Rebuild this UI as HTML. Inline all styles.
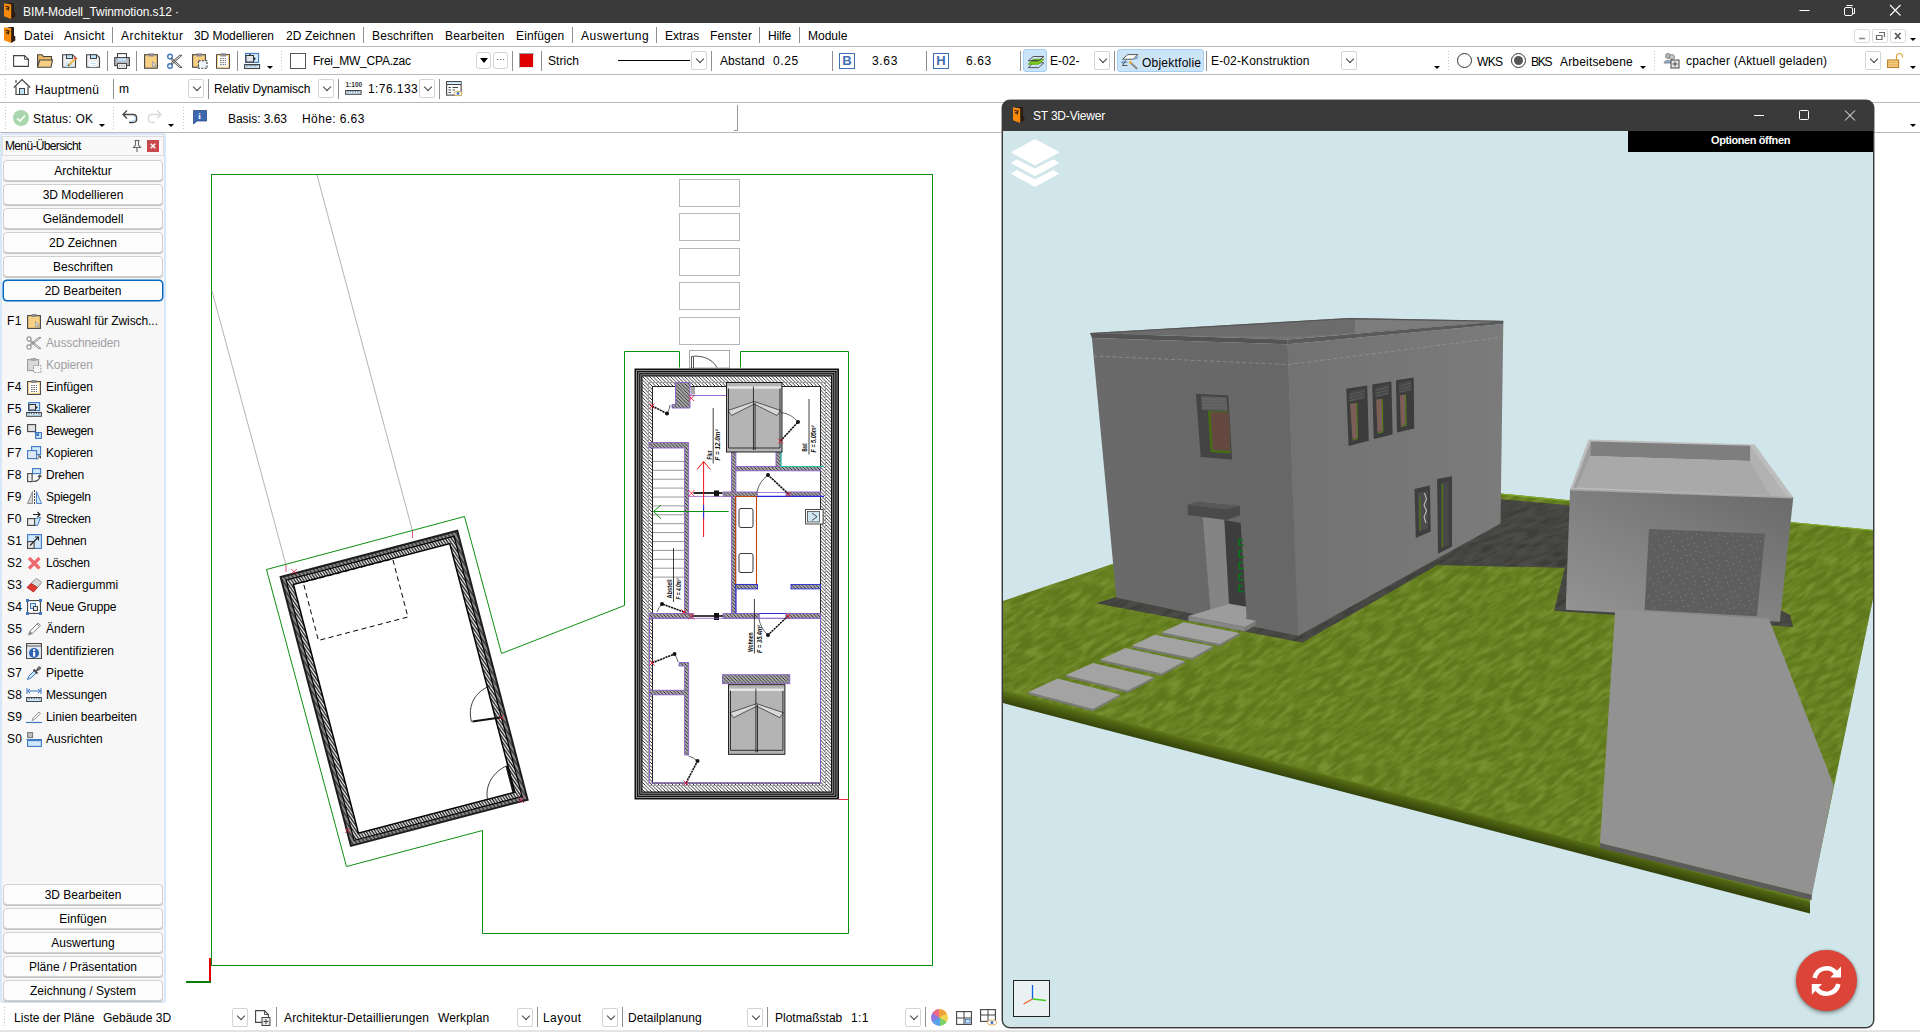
<!DOCTYPE html>
<html lang="de"><head><meta charset="utf-8"><title>BIM-Modell_Twinmotion.s12</title>
<style>
*{box-sizing:border-box}
html,body{margin:0;padding:0}
body{width:1920px;height:1032px;position:relative;overflow:hidden;background:#fff;font-family:"Liberation Sans",sans-serif;font-size:12px;color:#000}
.a{position:absolute}
.t{position:absolute;white-space:nowrap;line-height:14px;height:14px;font-size:12px;letter-spacing:-0.1px}
.hl{position:absolute;left:0;width:1920px;height:1px;background:#b9b9b9}
.vs{position:absolute;width:1px;background:#8f8f8f}
.dd{position:absolute;width:16px;height:19px;border:1px solid #d4d4d4;border-radius:2px;background:#fff}
.dd:after{content:"";position:absolute;left:4.500px;top:4px;width:5px;height:5px;border-right:1px solid #444;border-bottom:1px solid #444;transform:rotate(45deg)}
.ar{position:absolute;width:0;height:0;border-left:3px solid transparent;border-right:3px solid transparent;border-top:3px solid #000}
.grip{position:absolute;width:1px;background:repeating-linear-gradient(to bottom,#c4c4c4 0,#c4c4c4 1px,transparent 1px,transparent 3px)}
.mb{position:absolute;left:3px;width:160px;height:21px;border:1px solid #d0d0d0;border-radius:4px;background:#fdfdfd;text-align:center;line-height:21px;font-size:12px;box-shadow:0 1px 0 #c4c4c4}
.mb.sel{border:1px solid #0067c0;box-shadow:0 0 0 0.5px #0067c0}
.k{position:absolute;left:7px;font-size:12px;line-height:14px;white-space:nowrap;letter-spacing:0.3px}
.l{position:absolute;left:46px;font-size:12px;line-height:14px;white-space:nowrap;letter-spacing:0.05px}
.l.dis{color:#a0a0a0}
.ic{position:absolute;left:26px;width:16px;height:16px}
svg{position:absolute;overflow:visible}
</style></head><body>
<!-- ===== title bar ===== -->
<div class="a" style="left:0;top:0;width:1920px;height:23px;background:#3a3a3a"></div>
<svg style="left:3px;top:2px" width="14" height="18" viewBox="0 0 14 18"><path d="M3.5 1H11V10H12.3V14.6L8 17V2.5Z" fill="#2a1d12"/><path d="M1 1.2L8.2 2.6V17L1 14.2Z" fill="#f78a0c"/><path d="M2.5 4.2L6 5.2L5 8.5M3 6.6L5.8 7.3" stroke="#2a1d12" stroke-width="1.1" fill="none"/></svg>
<div class="t" style="left:23px;top:5px;color:#fff;letter-spacing:-0.08px;--w:155">BIM-Modell_Twinmotion.s12 ·</div>
<svg style="left:1795px;top:0" width="120" height="23" viewBox="0 0 120 23"><path d="M4.5 10.5H14.5" stroke="#fff" stroke-width="1" fill="none"/><path d="M51.5 5.5H57.5V6M59.5 8V13.5H58" stroke="#fff" stroke-width="1" fill="none"/><rect x="49.500" y="7.500" width="8" height="8" rx="1.500" fill="none" stroke="#fff" stroke-width="1"/><path d="M95 5L105.500 15.500M105.500 5L95 15.500" stroke="#fff" stroke-width="1.100" fill="none"/></svg>
<!-- ===== menu bar ===== -->
<svg style="left:3px;top:26px" width="14" height="18" viewBox="0 0 14 18"><path d="M3.5 1H11V10H12.3V14.6L8 17V2.5Z" fill="#2a1d12"/><path d="M1 1.200L8.200 2.600V17L1 14.200Z" fill="#f78a0c"/><path d="M2.500 4.200L6 5.200L5 8.500M3 6.600L5.800 7.300" stroke="#2a1d12" stroke-width="1.100" fill="none"/></svg>
<div class="t" style="left:24px;top:29px;letter-spacing:0.32px;--w:28.3">Datei</div>
<div class="t" style="left:64px;top:29px;letter-spacing:0.22px;--w:39.7">Ansicht</div>
<div class="vs" style="left:112px;top:27px;height:16px"></div>
<div class="t" style="left:121px;top:29px;letter-spacing:0.46px;--w:61">Architektur</div>
<div class="t" style="left:194px;top:29px;letter-spacing:-0.06px;--w:79">3D Modellieren</div>
<div class="t" style="left:286px;top:29px;letter-spacing:0.13px;--w:68.3">2D Zeichnen</div>
<div class="vs" style="left:363px;top:27px;height:16px"></div>
<div class="t" style="left:372px;top:29px;letter-spacing:0.13px;--w:60.3">Beschriften</div>
<div class="t" style="left:445px;top:29px;letter-spacing:0.14px;--w:58.3">Bearbeiten</div>
<div class="t" style="left:516px;top:29px;letter-spacing:0.13px;--w:47.3">Einfügen</div>
<div class="vs" style="left:572px;top:27px;height:16px"></div>
<div class="t" style="left:581px;top:29px;letter-spacing:0.48px;--w:66.7">Auswertung</div>
<div class="vs" style="left:656px;top:27px;height:16px"></div>
<div class="t" style="left:665px;top:29px;letter-spacing:0.06px;--w:33.3">Extras</div>
<div class="t" style="left:710px;top:29px;letter-spacing:0.22px;--w:41">Fenster</div>
<div class="vs" style="left:759px;top:27px;height:16px"></div>
<div class="t" style="left:768px;top:29px;letter-spacing:-0.18px;--w:22.3">Hilfe</div>
<div class="vs" style="left:799px;top:27px;height:16px"></div>
<div class="t" style="left:808px;top:29px;letter-spacing:-0.01px;--w:38.3">Module</div>
<!-- MDI buttons -->
<div class="a" style="left:1854px;top:29px;width:16px;height:14px;border:1px solid #dcdcdc;border-radius:2px"></div>
<div class="a" style="left:1872px;top:29px;width:16px;height:14px;border:1px solid #dcdcdc;border-radius:2px"></div>
<div class="a" style="left:1890px;top:29px;width:16px;height:14px;border:1px solid #dcdcdc;border-radius:2px"></div>
<svg style="left:1854px;top:29px" width="60" height="14" viewBox="0 0 60 14"><path d="M5 9.500H11" stroke="#8a8a8a" stroke-width="1.600" fill="none"/><path d="M25 3.500H30.500V8M22.500 6.500H28V10.500H22.500Z" stroke="#6a6a6a" stroke-width="1.200" fill="none"/><path d="M41 4L46.500 10M46.500 4L41 10" stroke="#555" stroke-width="1.700" fill="none"/></svg>
<div class="ar" style="left:1910px;top:38px"></div>
<div class="hl" style="top:46px"></div>
<!-- ===== toolbar 1 ===== -->
<div class="grip" style="left:5px;top:51px;height:20px"></div>
<div class="hl" style="top:74px"></div>
<svg style="left:0;top:0" width="1920" height="140" viewBox="0 0 1920 140" fill="none" stroke-linejoin="miter">
<!-- new -->
<path d="M13.600 55.600H24.500L28.400 59.300V66.400H13.600Z" fill="#fff" stroke="#444" stroke-width="1.100"/><path d="M24.500 55.600V59.300H28.400" stroke="#444" stroke-width="0.900"/>
<!-- open -->
<path d="M37.600 67.300V54.700H42L43.500 56.500H51.500V60" fill="#e9b866" stroke="#444" stroke-width="1.100"/><path d="M37.600 67.300L39.600 60H52.500L51 67.300Z" fill="#f7d084" stroke="#444" stroke-width="1.100"/>
<!-- save edit -->
<path d="M62.600 54.700H72.500L75.500 57.500V67.300H62.600Z" fill="#eeeef2" stroke="#444" stroke-width="1.100"/><rect x="66.500" y="54.700" width="6" height="3.800" fill="#bfe3fb" stroke="#444" stroke-width="1"/><rect x="66" y="63" width="6.500" height="4" fill="#bfe3fb"/><path d="M68.700 65.300L75.800 58.200" stroke="#e9b94f" stroke-width="2.200"/><path d="M75 59L76.300 57.700" stroke="#e02b3a" stroke-width="2.400"/><path d="M68 66L69.300 64.700" stroke="#6b4a1a" stroke-width="1.400"/>
<!-- save -->
<path d="M86.600 54.700H96.500L99.500 57.500V67.300H86.600Z" fill="#eeeef2" stroke="#444" stroke-width="1.100"/><rect x="90.500" y="54.700" width="6" height="3.800" fill="#bfe3fb" stroke="#444" stroke-width="1"/><rect x="89.500" y="62" width="7" height="5" fill="#fff"/><path d="M90.500 63.500H96M90.500 65.500H96" stroke="#bfe3fb" stroke-width="0.900"/>
<!-- print -->
<rect x="117.500" y="53.600" width="9" height="5" fill="#fff" stroke="#444" stroke-width="1.100"/><rect x="114.700" y="57.600" width="14.700" height="8" fill="#b9bcc4" stroke="#444" stroke-width="1.100"/><rect x="118" y="58.300" width="8" height="2.700" fill="#bfe3fb"/><rect x="117.500" y="63.600" width="9" height="4.800" fill="#fff" stroke="#444" stroke-width="1.100"/><path d="M119 66H125" stroke="#777" stroke-width="1" stroke-dasharray="1 0.700"/>
<!-- paste select -->
<rect x="144.600" y="54.700" width="12.800" height="13.500" fill="#f7d084" stroke="#444" stroke-width="1.100"/><rect x="148.500" y="53.300" width="5.500" height="3.200" fill="#8c8c8c"/><path d="M152.500 61.500V67L154 65.800L155 67.800L155.800 67.300L154.800 65.500L156.500 65.300Z" fill="#d8d8d8" stroke="#8a8a8a" stroke-width="0.600"/>
<!-- scissors -->
<circle cx="170" cy="56.600" r="2.300" stroke="#3f78c2" stroke-width="1.400"/><circle cx="170" cy="66" r="2.300" stroke="#3f78c2" stroke-width="1.400"/><path d="M171.800 58.200L182 67.500H179.500L171 59.500ZM171.800 64.500L182 55.300H179.500L171 63Z" fill="#d9d9d9" stroke="#4a4a4a" stroke-width="0.900"/>
<!-- paste dotted -->
<rect x="192.600" y="54.700" width="12.800" height="12.500" fill="#f7d084" stroke="#444" stroke-width="1.100"/><rect x="196.500" y="53.300" width="5.500" height="3.200" fill="#8c8c8c"/><rect x="198.500" y="60.700" width="8.500" height="7.600" fill="#eef6fd" stroke="#333" stroke-width="1.100" stroke-dasharray="2 1.300"/>
<!-- clipboard -->
<rect x="216.600" y="54.700" width="12.800" height="13.500" fill="#fff" stroke="#444" stroke-width="1.100"/><rect x="217.500" y="55.500" width="11" height="11.800" stroke="#f7d084" stroke-width="1"/><rect x="220.500" y="53.300" width="5.500" height="3.200" fill="#8c8c8c"/><path d="M220 58.600H226M220 60.600H226M220 62.600H226M220 64.600H226" stroke="#666" stroke-width="0.900" stroke-dasharray="1.700 0.800"/>
<!-- scale -->
<rect x="245.600" y="53.400" width="13" height="9" fill="#cfe8fb" stroke="#3f78c2" stroke-width="1.100"/><rect x="246" y="55.500" width="7.500" height="6.500" fill="#e4e4e8" stroke="#333" stroke-width="1"/><path d="M254 57L256 58.800L254 60.600Z M248.500 55.300L250 53.800L251.500 55.300Z" fill="#333"/><rect x="244.600" y="64.500" width="15" height="4" fill="#cfe8fb" stroke="#444" stroke-width="1.100"/><path d="M247 64.500V66.500M249 64.500V66M251 64.500V66.500M253 64.500V66M255 64.500V66.500M257 64.500V66" stroke="#444" stroke-width="0.800"/>
</svg>
<div class="vs" style="left:107px;top:51px;height:20px"></div>
<div class="vs" style="left:136px;top:51px;height:20px"></div>
<div class="vs" style="left:237px;top:51px;height:20px"></div>
<div class="ar" style="left:267px;top:66px"></div>
<div class="grip" style="left:281px;top:51px;height:20px"></div>
<div class="a" style="left:290px;top:53px;width:16px;height:16px;border:1px solid #555;background:#fff"></div>
<div class="t" style="left:313px;top:54px;letter-spacing:-0.22px;--w:97">Frei_MW_CPA.zac</div>
<div class="a" style="left:476px;top:52px;width:15px;height:17px;border:1px solid #d4d4d4;border-radius:3px"></div>
<div class="a" style="left:480px;top:58px;width:0;height:0;border-left:4px solid transparent;border-right:4px solid transparent;border-top:5px solid #000"></div>
<div class="a" style="left:493px;top:52px;width:15px;height:17px;border:1px solid #d4d4d4;border-radius:3px;font-size:9px;line-height:13px;text-align:center;color:#333">···</div>
<div class="vs" style="left:512px;top:51px;height:20px"></div>
<div class="a" style="left:519px;top:53px;width:15px;height:15px;background:#e00000;border-top:1px solid #9a9a9a;border-left:1px solid #9a9a9a;border-right:1px solid #e8e8e8;border-bottom:1px solid #e8e8e8"></div>
<div class="vs" style="left:541px;top:51px;height:20px"></div>
<div class="t" style="left:548px;top:54px;letter-spacing:0.06px;--w:30">Strich</div>
<div class="a" style="left:618px;top:60px;width:72px;height:1px;background:#000"></div>
<div class="dd" style="left:691px;top:51px"></div>
<div class="vs" style="left:711px;top:51px;height:20px"></div>
<div class="t" style="left:720px;top:54px;letter-spacing:0.09px;--w:43.6">Abstand</div>
<div class="t" style="left:773px;top:54px;letter-spacing:0.61px;--w:24.2">0.25</div>
<div class="vs" style="left:832px;top:51px;height:20px"></div>
<div class="a" style="left:839px;top:53px;width:16px;height:16px;border:1px solid #3f6fb5;color:#3f6fb5;font-size:13px;line-height:14px;text-align:center;font-weight:bold">B</div>
<div class="t" style="left:872px;top:54px;letter-spacing:0.65px;--w:24.3">3.63</div>
<div class="vs" style="left:926px;top:51px;height:20px"></div>
<div class="a" style="left:933px;top:53px;width:16px;height:16px;border:1px solid #3f6fb5;color:#3f6fb5;font-size:13px;line-height:14px;text-align:center;font-weight:bold">H</div>
<div class="t" style="left:966px;top:54px;letter-spacing:0.61px;--w:24.2">6.63</div>
<div class="vs" style="left:1020px;top:51px;height:20px"></div>
<div class="a" style="left:1023px;top:49px;width:24px;height:23px;background:#cce4f7;border:1px solid #a6d0f3;border-radius:3px"></div>
<svg style="left:0;top:0" width="1920" height="140" viewBox="0 0 1920 140" fill="none"><path d="M1033.200 62.800H1043.900L1038.700 67.600H1028.200Z" stroke="#444" stroke-width="0.900"/><path d="M1033.200 59.300H1043.900L1038.700 64.200H1028.200Z" fill="#7ed321" stroke="#5aa012" stroke-width="0.900"/><path d="M1033.200 56.500H1043.900L1038.700 60.800H1028.200Z" stroke="#444" stroke-width="0.900"/><path d="M1031 60.800H1038.700" stroke="#444" stroke-width="0.900"/></svg>
<div class="t" style="left:1050px;top:54px;letter-spacing:0.04px;--w:28.5">E-02-</div>
<div class="dd" style="left:1094px;top:51px"></div>
<div class="vs" style="left:1114px;top:51px;height:20px"></div>
<div class="a" style="left:1117px;top:49px;width:87px;height:23px;background:#cce4f7;border:1px solid #a6d0f3;border-radius:3px"></div>
<svg style="left:0;top:0" width="1920" height="140" viewBox="0 0 1920 140" fill="none"><path d="M1127.700 54.600H1137.800L1133.100 59.200H1122.600Z" fill="#fff" stroke="#444" stroke-width="0.900"/><path d="M1134.500 59.500L1137.500 56.500M1136 59.500L1138 57.500" stroke="#3f78c2" stroke-width="0.800"/><path d="M1122.500 62.300H1127.500M1121.500 62.300L1123.500 61M1121.500 62.300L1123.500 63.600" stroke="#3f78c2" stroke-width="0.800"/><path d="M1126 60.200L1122.500 65.500H1127.500" stroke="#444" stroke-width="0.900"/><path d="M1130.800 63L1137.300 69" stroke="#8a8a8a" stroke-width="1.900"/><path d="M1129.500 61.700L1131.300 63.400" stroke="#f0a818" stroke-width="2.400"/></svg>
<div class="t" style="left:1142px;top:56px;letter-spacing:0.23px;--w:58">Objektfolie</div>
<div class="vs" style="left:1206px;top:51px;height:20px"></div>
<div class="t" style="left:1211px;top:54px;letter-spacing:0.15px;--w:97.5">E-02-Konstruktion</div>
<div class="dd" style="left:1341px;top:51px"></div>
<div class="ar" style="left:1434px;top:66px"></div>
<div class="grip" style="left:1448px;top:51px;height:20px"></div>
<div class="a" style="left:1457px;top:53px;width:15px;height:15px;border:1px solid #333;border-radius:50%;background:#fff"></div>
<div class="t" style="left:1477px;top:55px;letter-spacing:-0.67px;--w:25">WKS</div>
<div class="a" style="left:1511px;top:53px;width:15px;height:15px;border:1px solid #333;border-radius:50%;background:#fff"></div>
<div class="a" style="left:1514px;top:56px;width:9px;height:9px;border-radius:50%;background:#555"></div>
<div class="t" style="left:1531px;top:55px;letter-spacing:-1.20px;--w:20">BKS</div>
<div class="t" style="left:1560px;top:55px;letter-spacing:0.18px;--w:71.7">Arbeitsebene</div>
<div class="ar" style="left:1640px;top:66px"></div>
<div class="grip" style="left:1654px;top:51px;height:20px"></div>
<svg style="left:1663px;top:52px" width="17" height="17" viewBox="0 0 17 17" fill="none"><circle cx="5" cy="4" r="2.500" fill="#b5b5b5" stroke="#777" stroke-width="0.800"/><path d="M1 11C1 7.500 9 7.500 9 11Z" fill="#8fb3e0" stroke="#777" stroke-width="0.800"/><circle cx="9" cy="5" r="2.500" fill="#c9c9c9" stroke="#777" stroke-width="0.800"/><rect x="8" y="8" width="8" height="8" fill="#e8e8e8" stroke="#444" stroke-width="1"/><path d="M12 9.500V14.500M9.500 12H14.500" stroke="#444" stroke-width="1"/></svg>
<div class="t" style="left:1686px;top:54px;letter-spacing:0.21px;--w:140.2">cpacher (Aktuell geladen)</div>
<div class="dd" style="left:1865px;top:51px"></div>
<svg style="left:1886px;top:52px" width="18" height="17" viewBox="0 0 18 17" fill="none"><path d="M10.500 8V4.500C10.500 0.500 16.500 0.500 16.500 4.500V5.500" stroke="#e0a33a" stroke-width="1.200"/><rect x="1.600" y="8" width="11" height="7.500" fill="#f7d084" stroke="#b8802a" stroke-width="1.100"/><path d="M2 10.500H12M2 13H12" stroke="#d9a64c" stroke-width="0.800"/></svg>
<div class="ar" style="left:1910px;top:66px"></div>
<!-- ===== toolbar 2 ===== -->
<div class="grip" style="left:5px;top:79px;height:20px"></div>
<svg style="left:13px;top:77px" width="18" height="19" viewBox="0 0 18 19" fill="none"><path d="M0.800 10.500L9 2.500L17.200 10.500" stroke="#444" stroke-width="1.200"/><path d="M3 6V3" stroke="#444" stroke-width="1.100"/><path d="M3 9.500V17.500H15V9.500" stroke="#444" stroke-width="1.200"/><rect x="6.500" y="11.500" width="5" height="6" fill="#bfe3fb" stroke="#444" stroke-width="1"/></svg>
<div class="t" style="left:35px;top:83px;letter-spacing:0.24px;--w:63">Hauptmenü</div>
<div class="vs" style="left:113px;top:79px;height:20px"></div>
<div class="t" style="left:119px;top:82px">m</div>
<div class="dd" style="left:188px;top:79px"></div>
<div class="vs" style="left:208px;top:79px;height:20px"></div>
<div class="t" style="left:214px;top:82px;letter-spacing:-0.19px;--w:95.3">Relativ Dynamisch</div>
<div class="dd" style="left:318px;top:79px"></div>
<div class="vs" style="left:338px;top:79px;height:20px"></div>
<svg style="left:345px;top:80px" width="17" height="16" viewBox="0 0 17 16" fill="none"><rect x="0.600" y="10.500" width="15.500" height="3.800" fill="#cfe8fb" stroke="#444" stroke-width="1"/><path d="M3 10.500V12.500M5.500 10.500V12M8 10.500V12.500M10.500 10.500V12M13 10.500V12.500" stroke="#444" stroke-width="0.800"/><text x="0.500" y="6.500" font-family="Liberation Sans,sans-serif" font-size="6.500" font-weight="bold" fill="#333" stroke="none">1:100</text></svg>
<div class="t" style="left:368px;top:82px;letter-spacing:0.43px;--w:48.7">1:76.133</div>
<div class="dd" style="left:419px;top:79px"></div>
<div class="vs" style="left:439px;top:79px;height:20px"></div>
<svg style="left:446px;top:80px" width="17" height="17" viewBox="0 0 17 17" fill="none"><rect x="0.600" y="1.600" width="14.500" height="13.500" fill="#fff" stroke="#444" stroke-width="1.100"/><path d="M0.600 4.500H15" stroke="#444" stroke-width="1"/><path d="M1 2.800H15" stroke="#bfe3fb" stroke-width="1.400"/><path d="M2.500 7.500H5M6.500 7.500H12M2.500 10H5M6.500 10H9M2.500 12.500H5" stroke="#444" stroke-width="1.100"/><ellipse cx="12" cy="13.500" rx="4" ry="2.300" fill="#fff" stroke="#d9a64c" stroke-width="0.900"/><circle cx="12" cy="13.500" r="1.400" fill="#3f78c2"/></svg>
<div class="hl" style="top:102px"></div>
<!-- ===== status row ===== -->
<div class="grip" style="left:5px;top:107px;height:22px"></div>
<div class="a" style="left:13px;top:110px;width:16px;height:16px;border-radius:50%;background:#a9d6ad"></div>
<svg style="left:13px;top:110px" width="16" height="16" viewBox="0 0 16 16" fill="none"><path d="M4.200 8.300L7 11L12 5.500" stroke="#fff" stroke-width="1.600"/></svg>
<div class="t" style="left:33px;top:112px;letter-spacing:0.22px;--w:59">Status: OK</div>
<div class="ar" style="left:99px;top:124px"></div>
<div class="grip" style="left:113px;top:107px;height:22px"></div>
<svg style="left:121px;top:108px" width="44" height="20" viewBox="0 0 44 20" fill="none"><path d="M2 6.500H12C17 6.500 17 14.500 12 14.500H8" stroke="#444" stroke-width="1.300"/><path d="M6 2.500L2 6.500L6 10.500" stroke="#444" stroke-width="1.300"/><path d="M12 7.800C15.300 7.800 15.300 13.200 12 13.200H9" stroke="#9cc3ea" stroke-width="1"/><path d="M40 6.500H31C26 6.500 26 14.500 31 14.500H34" stroke="#d9d9d9" stroke-width="1.300"/><path d="M36 2.500L40 6.500L36 10.500" stroke="#d9d9d9" stroke-width="1.300"/></svg>
<div class="ar" style="left:168px;top:124px"></div>
<div class="grip" style="left:183px;top:107px;height:22px"></div>
<svg style="left:192px;top:109px" width="16" height="16" viewBox="0 0 16 16" fill="none"><path d="M1.500 1.500H14.500V12H5L1.500 15Z" fill="#3d68b0" stroke="#2b4d87" stroke-width="0.800"/><text x="6.200" y="10" font-family="Liberation Serif,serif" font-size="9" font-weight="bold" fill="#fff">i</text></svg>
<div class="t" style="left:228px;top:112px;letter-spacing:-0.04px;--w:58">Basis: 3.63</div>
<div class="t" style="left:302px;top:112px;letter-spacing:0.40px;--w:61.3">Höhe: 6.63</div>
<div class="a" style="left:737px;top:105px;width:1px;height:25px;background:#9a9a9a"></div>
<div class="a" style="left:734px;top:130px;width:4px;height:1px;background:#9a9a9a"></div>
<div class="ar" style="left:1910px;top:124px"></div>
<div class="hl" style="top:132px"></div>
<!-- ===== left panel ===== -->
<div class="a" style="left:0;top:133px;width:166px;height:870px;background:#f7f7f8;border:2px solid #d6e8fa;border-radius:3px"></div>
<div class="a" style="left:2px;top:136px;width:162px;height:20px;border:1px solid #dcdcdc;background:#f9f9f9"></div>
<div class="t" style="left:5px;top:139px;letter-spacing:-0.65px;--w:75.2">Menü-Übersicht</div>
<svg style="left:131px;top:139px" width="12" height="14" viewBox="0 0 12 14" fill="none"><path d="M3.500 1.500H8.500M4.500 1.500V6L2.500 8.500H9.500L7.500 6V1.500M6 8.500V13" stroke="#666" stroke-width="1.100"/></svg>
<div class="a" style="left:147px;top:140px;width:12px;height:12px;background:#c9484c"></div>
<svg style="left:147px;top:140px" width="12" height="12" viewBox="0 0 12 12" fill="none"><path d="M3.700 3.800L8.300 8.300M8.300 3.800L3.700 8.300" stroke="#fff" stroke-width="1.500"/></svg>
<div class="mb" style="top:160px">Architektur</div>
<div class="mb" style="top:184px">3D Modellieren</div>
<div class="mb" style="top:208px">Geländemodell</div>
<div class="mb" style="top:232px">2D Zeichnen</div>
<div class="mb" style="top:256px">Beschriften</div>
<div class="mb sel" style="top:280px">2D Bearbeiten</div>
<div class="k" style="top:314px">F1</div>
<svg class="ic" style="top:313px" width="16" height="16" viewBox="0 0 16 16" fill="none"><rect x="1.6" y="2.6" width="12.800" height="12.800" fill="#f7d084" stroke="#444" stroke-width="1.100"/><rect x="5.500" y="1" width="5" height="3" fill="#8c8c8c"/><path d="M9.500 8.500V14L11 12.800L12 14.800L12.800 14.300L11.800 12.500L13.500 12.300Z" fill="#d8d8d8" stroke="#8a8a8a" stroke-width="0.600"/></svg>
<div class="l" style="top:314px;letter-spacing:-0.07px;--w:111">Auswahl für Zwisch...</div>
<svg class="ic" style="top:335px" width="16" height="16" viewBox="0 0 16 16" fill="none"><circle cx="3" cy="4" r="2.100" stroke="#9a9a9a" stroke-width="1.200" fill="none"/><circle cx="3" cy="12" r="2.100" stroke="#9a9a9a" stroke-width="1.200" fill="none"/><path d="M4.600 5.400L15 13.500H12.500L4 6.600ZM4.600 10.600L15 2.500H12.500L4 9.400Z" fill="#e4e4e4" stroke="#8a8a8a" stroke-width="0.900"/></svg>
<div class="l dis" style="top:336px;letter-spacing:-0.13px;--w:73">Ausschneiden</div>
<svg class="ic" style="top:357px" width="16" height="16" viewBox="0 0 16 16" fill="none"><rect x="1.600" y="2.600" width="11" height="11" fill="#d9d9d9" stroke="#9a9a9a" stroke-width="1.100"/><rect x="5" y="1" width="5" height="3" fill="#a8a8a8"/><rect x="7.500" y="8.500" width="7.500" height="7" fill="#f4f4f4" stroke="#9a9a9a" stroke-width="1" stroke-dasharray="2 1.200"/></svg>
<div class="l dis" style="top:358px;letter-spacing:-0.15px;--w:46">Kopieren</div>
<div class="k" style="top:380px">F4</div>
<svg class="ic" style="top:379px" width="16" height="16" viewBox="0 0 16 16" fill="none"><rect x="1.600" y="2.600" width="12.800" height="12.800" fill="#fff" stroke="#444" stroke-width="1.100"/><rect x="2.600" y="3.600" width="10.800" height="10.800" stroke="#f7d084" stroke-width="1" fill="none"/><rect x="5.500" y="1" width="5" height="3" fill="#8c8c8c"/><path d="M5 6.500H11M5 8.500H11M5 10.500H11M5 12.500H11" stroke="#666" stroke-width="0.900" stroke-dasharray="1.700 0.800"/></svg>
<div class="l" style="top:380px;letter-spacing:-0.05px;--w:46">Einfügen</div>
<div class="k" style="top:402px">F5</div>
<svg class="ic" style="top:401px" width="16" height="16" viewBox="0 0 16 16" fill="none"><rect x="2.600" y="1.600" width="11" height="8" fill="#cfe8fb" stroke="#3f78c2" stroke-width="1.100"/><rect x="3" y="3.500" width="6.500" height="5.500" fill="#e4e4e8" stroke="#333" stroke-width="1"/><path d="M10 5L12 6.500L10 8Z" fill="#333"/><rect x="0.600" y="11.500" width="14.800" height="3.800" fill="#cfe8fb" stroke="#444" stroke-width="1"/><path d="M3 11.500V13.500M5.500 11.500V13M8 11.500V13.500M10.500 11.500V13M13 11.500V13.500" stroke="#444" stroke-width="0.800"/></svg>
<div class="l" style="top:402px;letter-spacing:-0.37px;--w:43.4">Skalierer</div>
<div class="k" style="top:424px">F6</div>
<svg class="ic" style="top:423px" width="16" height="16" viewBox="0 0 16 16" fill="none"><rect x="1.600" y="1.600" width="8" height="7" fill="#e4e4e8" stroke="#444" stroke-width="1.100"/><rect x="9.600" y="9.600" width="5.800" height="5.800" fill="#cfe8fb" stroke="#3f78c2" stroke-width="1.100"/><path d="M8 8L12.500 12.500M12.500 9.500V12.500H9.500" stroke="#3f78c2" stroke-width="1.100" fill="none"/></svg>
<div class="l" style="top:424px;letter-spacing:-0.42px;--w:46.5">Bewegen</div>
<div class="k" style="top:446px">F7</div>
<svg class="ic" style="top:445px" width="16" height="16" viewBox="0 0 16 16" fill="none"><rect x="5.600" y="1.600" width="9" height="8" fill="#cfe8fb" stroke="#3f78c2" stroke-width="1.100"/><rect x="1.600" y="5.600" width="9" height="8" fill="#dfe9f5" stroke="#3f78c2" stroke-width="1.100"/><path d="M11 14.500L14.500 11M14.500 13.500V11H12" stroke="#444" stroke-width="1" fill="none"/></svg>
<div class="l" style="top:446px;letter-spacing:-0.15px;--w:46">Kopieren</div>
<div class="k" style="top:468px">F8</div>
<svg class="ic" style="top:467px" width="16" height="16" viewBox="0 0 16 16" fill="none"><rect x="6.600" y="1.600" width="8" height="5" fill="#cfe8fb" stroke="#3f78c2" stroke-width="1.100"/><rect x="1.600" y="6.600" width="4.500" height="8" fill="#f0f0f0" stroke="#444" stroke-width="1.100"/><path d="M7 14.500C12 14.500 14 12 14 8.500M12 10L14 8L15.500 10" stroke="#444" stroke-width="1.100" fill="none"/></svg>
<div class="l" style="top:468px;letter-spacing:-0.23px;--w:37.2">Drehen</div>
<div class="k" style="top:490px">F9</div>
<svg class="ic" style="top:489px" width="16" height="16" viewBox="0 0 16 16" fill="none"><path d="M6.500 2.500V14.500H1.500Z" fill="#d4d4d4" stroke="#888" stroke-width="0.900"/><path d="M10.500 2.500V14.500H15.500Z" fill="#cfe8fb" stroke="#3f78c2" stroke-width="0.900"/><path d="M8.500 1V15.500" stroke="#444" stroke-width="1" stroke-dasharray="2 1"/></svg>
<div class="l" style="top:490px;letter-spacing:-0.25px;--w:44">Spiegeln</div>
<div class="k" style="top:512px">F0</div>
<svg class="ic" style="top:511px" width="16" height="16" viewBox="0 0 16 16" fill="none"><path d="M1.600 7.600H9L14.500 6.500L11.500 14.400H1.600Z" fill="#cfe8fb" stroke="#3f78c2" stroke-width="1"/><rect x="1.600" y="7.600" width="7" height="6.800" fill="#ececec" stroke="#444" stroke-width="1.100"/><path d="M7 3.500H14M11.500 1L14 3.500L11.500 6" stroke="#222" stroke-width="1.100" fill="none"/></svg>
<div class="l" style="top:512px;letter-spacing:-0.34px;--w:44">Strecken</div>
<div class="k" style="top:534px">S1</div>
<svg class="ic" style="top:533px" width="16" height="16" viewBox="0 0 16 16" fill="none"><rect x="1.600" y="1.600" width="13.800" height="13.800" fill="#cfe8fb" stroke="#3f78c2" stroke-width="1.100"/><rect x="1.600" y="8.600" width="6.500" height="6.800" fill="#ececec" stroke="#444" stroke-width="1.100"/><path d="M4 12.500L12.500 4M9 4H12.500V7.500" stroke="#222" stroke-width="1.100" fill="none"/></svg>
<div class="l" style="top:534px;letter-spacing:-0.27px;--w:39.7">Dehnen</div>
<div class="k" style="top:556px">S2</div>
<svg class="ic" style="top:555px" width="16" height="16" viewBox="0 0 16 16" fill="none"><path d="M3 3L13.500 13.500M13.500 3L3 13.500" stroke="#ee6a6f" stroke-width="3.200" fill="none"/></svg>
<div class="l" style="top:556px;letter-spacing:-0.26px;--w:42.8">Löschen</div>
<div class="k" style="top:578px">S3</div>
<svg class="ic" style="top:577px" width="16" height="16" viewBox="0 0 16 16" fill="none"><path d="M1 10.500L8.500 3L15 6.500L7.500 15Z" fill="#e03a32"/><path d="M8.500 3L10.500 1.500L15.500 5L15 6.500L11.500 10.500L5 6.500Z" fill="#d9d9d9" stroke="#777" stroke-width="0.700"/><path d="M1 10.500L5 6.500L11.500 10.500L7.500 15Z" fill="#e03a32" stroke="#a52a24" stroke-width="0.700"/></svg>
<div class="l" style="top:578px;letter-spacing:0.09px;--w:71.3">Radiergummi</div>
<div class="k" style="top:600px">S4</div>
<svg class="ic" style="top:599px" width="16" height="16" viewBox="0 0 16 16" fill="none"><rect x="1.600" y="1.600" width="12.800" height="12.800" fill="#fff" stroke="#444" stroke-width="1.100"/><rect x="4.500" y="4.500" width="5" height="5" fill="#cfe8fb" stroke="#3f78c2" stroke-width="1"/><rect x="7.500" y="7.500" width="4" height="4" fill="#e4e4e8" stroke="#444" stroke-width="1"/><path d="M0 0H3V3H0ZM13 0H16V3H13ZM0 13H3V16H0ZM13 13H16V16H13Z" fill="#3f78c2"/></svg>
<div class="l" style="top:600px;letter-spacing:-0.15px;--w:69.5">Neue Gruppe</div>
<div class="k" style="top:622px">S5</div>
<svg class="ic" style="top:621px" width="16" height="16" viewBox="0 0 16 16" fill="none"><path d="M2.500 14L4 10L12 2L14.500 4.500L6.500 12.500Z" fill="#f4f4f4" stroke="#8a8a8a" stroke-width="1"/><path d="M2.500 14L4 10L6.500 12.500Z" fill="#8a8a8a"/><path d="M11 3L13.500 5.500" stroke="#8a8a8a" stroke-width="1"/></svg>
<div class="l" style="top:622px;letter-spacing:0.02px;--w:37.8">Ändern</div>
<div class="k" style="top:644px">S6</div>
<svg class="ic" style="top:643px" width="16" height="16" viewBox="0 0 16 16" fill="none"><rect x="0.600" y="0.600" width="14.800" height="14.800" fill="#fff" stroke="#444" stroke-width="1.100"/><path d="M1 3H15" stroke="#444" stroke-width="1"/><rect x="1.500" y="4" width="13" height="11" fill="#dfe9f5"/><circle cx="8" cy="10" r="5" fill="#2f62b0"/><rect x="7" y="9" width="2.200" height="4.500" fill="#fff"/><rect x="7" y="6.300" width="2.200" height="1.900" fill="#fff"/></svg>
<div class="l" style="top:644px;letter-spacing:-0.00px;--w:67">Identifizieren</div>
<div class="k" style="top:666px">S7</div>
<svg class="ic" style="top:665px" width="16" height="16" viewBox="0 0 16 16" fill="none"><path d="M1.500 14.500L3 11L8.500 5.500L10.500 7.500L5 13Z" fill="#cfe8fb" stroke="#3f78c2" stroke-width="1"/><path d="M7.500 4.500L11.500 8.500" stroke="#444" stroke-width="1.800"/><path d="M9.500 6.500L12 2.500C13.500 0.500 16 3 13.800 4.500Z" fill="#777" stroke="#444" stroke-width="0.800"/></svg>
<div class="l" style="top:666px;letter-spacing:0.04px;--w:36.6">Pipette</div>
<div class="k" style="top:688px">S8</div>
<svg class="ic" style="top:687px" width="16" height="16" viewBox="0 0 16 16" fill="none"><path d="M1 1V7M15 1V7M1.500 4H14.500M4 2L1.500 4L4 6M12 2L14.500 4L12 6" stroke="#3f78c2" stroke-width="1" fill="none"/><rect x="0.600" y="10.500" width="14.800" height="4" fill="#cfe8fb" stroke="#444" stroke-width="1"/><path d="M3 10.500V12.500M5.500 10.500V12M8 10.500V12.500M10.500 10.500V12M13 10.500V12.500" stroke="#444" stroke-width="0.800"/></svg>
<div class="l" style="top:688px;letter-spacing:-0.14px;--w:59.9">Messungen</div>
<div class="k" style="top:710px">S9</div>
<svg class="ic" style="top:709px" width="16" height="16" viewBox="0 0 16 16" fill="none"><path d="M0 13.500H16" stroke="#3f78c2" stroke-width="1.200"/><path d="M6 11.500L7 9L13 3L14.500 4.500L8.500 10.500Z" fill="#f4f4f4" stroke="#8a8a8a" stroke-width="0.900"/></svg>
<div class="l" style="top:710px;letter-spacing:-0.07px;--w:90">Linien bearbeiten</div>
<div class="k" style="top:732px">S0</div>
<svg class="ic" style="top:731px" width="16" height="16" viewBox="0 0 16 16" fill="none"><rect x="1.600" y="1.600" width="5" height="5" fill="#bdbdbd" stroke="#777" stroke-width="1"/><rect x="1.600" y="9.600" width="13.800" height="5.800" fill="#cfe8fb" stroke="#3f78c2" stroke-width="1.100"/><path d="M0.500 8.500H16" stroke="#3f78c2" stroke-width="1"/></svg>
<div class="l" style="top:732px;letter-spacing:0.01px;--w:55.8">Ausrichten</div>
<div class="mb" style="top:884px">3D Bearbeiten</div>
<div class="mb" style="top:908px">Einfügen</div>
<div class="mb" style="top:932px">Auswertung</div>
<div class="mb" style="top:956px">Pläne / Präsentation</div>
<div class="mb" style="top:980px">Zeichnung / System</div>
<!-- ===== bottom bar ===== -->
<div class="grip" style="left:4px;top:1007px;height:20px"></div>
<div class="t" style="left:14px;top:1011px;letter-spacing:0.02px;--w:79.4">Liste der Pläne</div>
<div class="t" style="left:103px;top:1011px;letter-spacing:0.00px;--w:67.1">Gebäude 3D</div>
<div class="dd" style="left:232px;top:1008px"></div>
<svg style="left:254px;top:1009px" width="17" height="17" viewBox="0 0 17 17" fill="none"><path d="M1.600 1.600H10.500L14.400 5.500V13.400H1.600Z" fill="#fff" stroke="#444" stroke-width="1.100"/><path d="M10.500 1.600V5.500H14.400" stroke="#444" stroke-width="0.900"/><rect x="8" y="8.500" width="8" height="8" fill="#e8e8e8" stroke="#444" stroke-width="1"/><path d="M12 10V15M9.500 12.500H14.500" stroke="#444" stroke-width="1"/></svg>
<div class="vs" style="left:276px;top:1007px;height:20px"></div>
<div class="t" style="left:284px;top:1011px;letter-spacing:0.14px;--w:144.1">Architektur-Detaillierungen</div>
<div class="t" style="left:438px;top:1011px;letter-spacing:0.10px;--w:50.2">Werkplan</div>
<div class="dd" style="left:517px;top:1008px"></div>
<div class="vs" style="left:537px;top:1007px;height:20px"></div>
<div class="t" style="left:543px;top:1011px;letter-spacing:0.43px;--w:37.2">Layout</div>
<div class="dd" style="left:602px;top:1008px"></div>
<div class="vs" style="left:622px;top:1007px;height:20px"></div>
<div class="t" style="left:628px;top:1011px;letter-spacing:0.02px;--w:72.6">Detailplanung</div>
<div class="dd" style="left:747px;top:1008px"></div>
<div class="vs" style="left:767px;top:1007px;height:20px"></div>
<div class="t" style="left:775px;top:1011px;letter-spacing:-0.01px;--w:66.3">Plotmaßstab</div>
<div class="t" style="left:851px;top:1011px;letter-spacing:0.41px;--w:16.5">1:1</div>
<div class="dd" style="left:905px;top:1008px"></div>
<div class="vs" style="left:925px;top:1007px;height:20px"></div>
<div class="a" style="left:931px;top:1009px;width:17px;height:17px;border-radius:50%;background:conic-gradient(#f2a23a 0 60deg,#f0d24c 60deg 120deg,#7bd06a 120deg 180deg,#5aa0e8 180deg 240deg,#8f78e0 240deg 300deg,#ee6a8a 300deg 360deg)"></div>
<svg style="left:956px;top:1009px" width="42" height="18" viewBox="0 0 42 18" fill="none"><rect x="0.600" y="2.600" width="14.800" height="12.800" fill="#fff" stroke="#444" stroke-width="1.100"/><path d="M0.600 9H15.400M8 2.600V15.400" stroke="#444" stroke-width="1"/><rect x="9.500" y="10.500" width="4.500" height="3.500" fill="#cfe8fb" stroke="#3f78c2" stroke-width="0.800"/><rect x="24.600" y="0.600" width="14.800" height="11.800" fill="#fff" stroke="#444" stroke-width="1.100"/><path d="M24.600 6H39.400M32 0.600V12.400" stroke="#444" stroke-width="1"/><ellipse cx="36" cy="13.500" rx="4.500" ry="2.500" fill="#fff" stroke="#d9a64c" stroke-width="0.900"/><circle cx="36" cy="13.500" r="1.500" fill="#3f78c2"/></svg>
<div class="a" style="left:0;top:1030px;width:1920px;height:2px;background:#e4e4e4"></div>
<!-- ===== 2D plan ===== -->
<svg style="left:0;top:0" width="1003" height="1005" viewBox="0 0 1003 1005" fill="none">
<defs>
<pattern id="hw" width="3.500" height="3.500" patternUnits="userSpaceOnUse"><rect width="3.500" height="3.500" fill="#fff"/><path d="M-1 -1L4.500 4.500M-1 2.500L1 4.500M2.500 -1L4.500 1" stroke="#000" stroke-width="0.800"/></pattern>
<pattern id="hg" width="3.500" height="3.500" patternUnits="userSpaceOnUse"><rect width="3.500" height="3.500" fill="#a8a8a8"/><path d="M-1 -1L4.500 4.500M-1 2.500L1 4.500M2.500 -1L4.500 1" stroke="#1a1a1a" stroke-width="0.800"/></pattern>
<pattern id="hw2" width="3.600" height="3.600" patternUnits="userSpaceOnUse" patternTransform="rotate(25)"><rect width="3.600" height="3.600" fill="#fff"/><path d="M-1 -1L4.600 4.600M-1 2.600L1 4.600M2.600 -1L4.600 1" stroke="#000" stroke-width="1.150"/></pattern>
<pattern id="hg2" width="5" height="5" patternUnits="userSpaceOnUse" patternTransform="rotate(25)"><rect width="5" height="5" fill="#8e8e8e"/><path d="M-1 -1L6 6M-1 4L1 6M4 -1L6 1" stroke="#2a2a2a" stroke-width="1.300"/></pattern>
</defs>
<rect x="211.500" y="174.500" width="721" height="791" stroke="#0f8f12" stroke-width="1"/>
<path d="M210 958V982" stroke="#e00000" stroke-width="2"/><path d="M186 982H211" stroke="#0a7a0a" stroke-width="2"/>
<path d="M317 175L412.500 531M212 291L286 565" stroke="#b4b4b4" stroke-width="1"/>
<rect x="679.500" y="179.5" width="60" height="27" stroke="#b8b8b8" stroke-width="1"/>
<rect x="679.500" y="213.5" width="60" height="27" stroke="#b8b8b8" stroke-width="1"/>
<rect x="679.500" y="248.5" width="60" height="27" stroke="#b8b8b8" stroke-width="1"/>
<rect x="679.500" y="282.5" width="60" height="27" stroke="#b8b8b8" stroke-width="1"/>
<rect x="679.500" y="317.5" width="60" height="27" stroke="#b8b8b8" stroke-width="1"/>
<path d="M679.500 367.500V351.500H624.500V605.500L501.500 653.500L464.500 516.500L266.500 569.500L346.500 866.500L482.500 830.500V933.500H848.500V351.500H740.500V367.500" stroke="#0f8f12" stroke-width="1"/>
<rect x="689.500" y="350.500" width="40" height="17.500" stroke="#a8a8a8" stroke-width="1"/>
<path d="M691.500 368V356.500C700 355 712 358 717 367.500M693.500 357V368" stroke="#222" stroke-width="0.800"/>
<g transform="translate(279.400 576.200) rotate(-14.650)">
<rect x="0" y="0" width="184.600" height="280" fill="#1c1c1c"/>
<rect x="2" y="2" width="180.600" height="276" fill="url(#hg2)"/>
<rect x="5.500" y="5.500" width="173.600" height="269" fill="url(#hw2)" stroke="#000" stroke-width="1.200"/>
<rect x="11.500" y="11.500" width="161.600" height="257" fill="#fff" stroke="#000" stroke-width="1.500"/>
<rect x="21.500" y="12" width="92.500" height="60" stroke="#000" stroke-width="0.900" stroke-dasharray="5 3.500"/>
<path d="M178 192.500L150 189.500" stroke="#111" stroke-width="2"/><path d="M149 189.500C149 173 160 161 176 159.500" stroke="#222" stroke-width="0.800"/>
<path d="M172 268V241" stroke="#111" stroke-width="2.500"/><path d="M172 241C158 243 146 254 145 268" stroke="#222" stroke-width="0.800"/>
</g>
<path d="M412.500 531V538M286 565V572M291 569L297 574M297 569L291 574M345 828L350 833M350 828L345 833M518 797L524 803M524 797L518 803M499 715L504 720M504 715L499 720" stroke="#e0264a" stroke-width="0.800"/>
<!-- house -->
<rect x="634.500" y="368.500" width="204.500" height="431" fill="#111"/>
<path d="M636.500 370.500H837V797.500H636.500ZM638.700 372.700H834.800V795.300H638.700ZM640.800 374.800H832.700V793.200H640.800Z" stroke="#c4c4c4" stroke-width="0.700"/>
<rect x="642.500" y="376.500" width="188.500" height="415" fill="url(#hw)"/>
<rect x="648.500" y="382.500" width="177" height="403" fill="url(#hw)" stroke="#a2a2a2" stroke-width="1"/>
<rect x="652.500" y="386.500" width="168" height="396.500" fill="#fff" stroke="#111" stroke-width="0.900"/>
<path d="M653 461.4H684.500M653 470.3H684.500M653 479.2H684.500M653 488.1H684.500M653 497.0H684.500M653 505.9H684.500M653 514.8H684.500M653 523.7H684.500M653 532.6H684.500M653 541.5H684.500M653 550.4H684.500M653 559.3H684.500M653 568.2H684.500M653 577.1H684.500" stroke="#9a9a9a" stroke-width="1"/>
<path d="M649.500 442.500H688.600V613.500H684.600V448H649.500Z" fill="url(#hg)" stroke="#8b5fc7" stroke-width="0.900"/>
<path d="M675.500 382.500H690V408H672V404.500H675.500Z" fill="url(#hg)" stroke="#8b5fc7" stroke-width="0.900"/><path d="M690 395.500H726.500" stroke="#8b5fc7" stroke-width="0.900"/>
<path d="M692 386V394.500M694 386V394.500" stroke="#222" stroke-width="0.800"/>
<rect x="731.400" y="452" width="4.500" height="161.500" fill="url(#hg)" stroke="#8b5fc7" stroke-width="0.900"/>
<rect x="735.900" y="466.500" width="84.500" height="4.300" fill="url(#hg)" stroke="#8b5fc7" stroke-width="0.900"/>
<rect x="776" y="452" width="4.900" height="14.500" fill="url(#hg)" stroke="#8b5fc7" stroke-width="0.900"/>
<path d="M780.900 452V466.500H824" stroke="#1fc4a0" stroke-width="1.200"/>
<rect x="723.200" y="492" width="34" height="4.400" fill="url(#hg)" stroke="#8b5fc7" stroke-width="0.900"/>
<rect x="786" y="492" width="34.500" height="4.400" fill="url(#hg)" stroke="#8b5fc7" stroke-width="0.900"/>
<path d="M757 496.400H824" stroke="#2a2ad8" stroke-width="1.200"/>
<path d="M757 492.500H786" stroke="#8b5fc7" stroke-width="0.800"/>
<path d="M693.500 493H722.500" stroke="#111" stroke-width="1.800"/><rect x="714" y="490.500" width="5" height="6" fill="#111"/>
<path d="M688.600 496.400H723" stroke="#8b5fc7" stroke-width="0.800"/>
<rect x="735.500" y="496.500" width="21" height="88" stroke="#c2470d" stroke-width="1.100"/>
<rect x="739" y="508.500" width="14" height="19" rx="2" stroke="#222" stroke-width="0.900"/><rect x="739" y="553.500" width="14" height="19" rx="2" stroke="#222" stroke-width="0.900"/>
<rect x="735.500" y="584.500" width="22" height="4.400" fill="url(#hg)" stroke="#2a2ad8" stroke-width="0.900"/>
<rect x="791" y="584.500" width="29.500" height="4.400" fill="url(#hg)" stroke="#2a2ad8" stroke-width="0.900"/>
<path d="M735.900 589V613.500H820.500" stroke="#2a2ad8" stroke-width="1.100"/>
<rect x="805.600" y="509.500" width="17.500" height="14.500" fill="#fff" stroke="#333" stroke-width="0.900"/><rect x="807.500" y="511.500" width="12" height="10.500" fill="#cfe6f2" stroke="#333" stroke-width="0.700"/><path d="M812 513L817 516.700L812 520.500" stroke="#222" stroke-width="0.800"/>
<rect x="649.500" y="613.500" width="43" height="4.800" fill="url(#hg)" stroke="#8b5fc7" stroke-width="0.900"/>
<rect x="723.200" y="613.500" width="36" height="4.800" fill="url(#hg)" stroke="#8b5fc7" stroke-width="0.900"/>
<rect x="786" y="613.500" width="34.500" height="4.800" fill="url(#hg)" stroke="#8b5fc7" stroke-width="0.900"/>
<path d="M692.500 616H723" stroke="#111" stroke-width="1.600"/><rect x="714" y="613" width="5" height="7" fill="#111"/>
<path d="M649.500 618.300H820.500M759 618.300H786" stroke="#8b5fc7" stroke-width="0.800"/>
<path d="M679 662.500H688.600V755H684.600V694.800H649.500V690.300H684.600V666H679Z" fill="url(#hg)" stroke="#8b5fc7" stroke-width="0.900"/>
<path d="M649.500 618.300V783H820.500V618.300" stroke="#8b5fc7" stroke-width="0.900"/>
<rect x="726.5" y="382.5" width="55.5" height="69.5" fill="#b4b4b4" stroke="#111" stroke-width="0.900"/><path d="M727.5 387.5H781.0" stroke="#e6e6e6" stroke-width="2.500"/><path d="M728.0 410.5L754.25 401.5L780.5 410.5L777.0 415.5L754.25 404.0L731.5 415.5Z" fill="#d9d9d9" stroke="#222" stroke-width="0.700"/><path d="M753.45 386.5V450.0M755.05 402.5V450.0M728.5 388.5V448.0M780.0 388.5V448.0M728.5 448.0H780.0" stroke="#111" stroke-width="0.800"/>
<rect x="722.500" y="674.700" width="67.300" height="9" fill="url(#hg)" stroke="#8b5fc7" stroke-width="0.900"/>
<rect x="728.5" y="684.7" width="56.4" height="69.6" fill="#b4b4b4" stroke="#111" stroke-width="0.900"/><path d="M729.5 689.7H783.9" stroke="#e6e6e6" stroke-width="2.500"/><path d="M730.0 712.7L756.7 703.7L783.4 712.7L779.9 717.7L756.7 706.2L733.5 717.7Z" fill="#d9d9d9" stroke="#222" stroke-width="0.700"/><path d="M755.9000000000001 688.7V752.3000000000001M757.5 704.7V752.3000000000001M730.5 690.7V750.3000000000001M782.9 690.7V750.3000000000001M730.5 750.3000000000001H782.9" stroke="#111" stroke-width="0.800"/>
<path d="M703.600 461.500V537M697 469.500L703.600 461.500L710.500 469.500" stroke="#f01010" stroke-width="1"/><path d="M703.600 505V518.700" stroke="#2030e0" stroke-width="1"/>
<path d="M653.500 511.500H728.700M661 505L653.500 511.500L661 518.700" stroke="#109010" stroke-width="1"/>
<path d="M652 406L667 413.5" stroke="#111" stroke-width="1.6" stroke-dasharray="2.200 0.700"/><path d="M667 413.5A16.8 16.8 0 0 0 670 405" stroke="#222" stroke-width="0.700"/><circle cx="667" cy="413.5" r="2" fill="#111"/><path d="M649.5 403.5L654.5 408.5M654.5 403.5L649.5 408.5" stroke="#e81030" stroke-width="0.800"/>
<path d="M780.5 441L798 422" stroke="#111" stroke-width="1.6" stroke-dasharray="2.200 0.700"/><path d="M798 422A25.8 25.8 0 0 0 781 412.5" stroke="#222" stroke-width="0.700"/><circle cx="798" cy="422" r="2" fill="#111"/><path d="M778.0 438.5L783.0 443.5M783.0 438.5L778.0 443.5" stroke="#e81030" stroke-width="0.800"/>
<path d="M788.5 494L768 475" stroke="#111" stroke-width="1.6" stroke-dasharray="2.200 0.700"/><path d="M768 475A28.0 28.0 0 0 0 757 492" stroke="#222" stroke-width="0.700"/><circle cx="768" cy="475" r="2" fill="#111"/><path d="M786.0 491.5L791.0 496.5M791.0 491.5L786.0 496.5" stroke="#e81030" stroke-width="0.800"/>
<path d="M788 616L768 635" stroke="#111" stroke-width="1.6" stroke-dasharray="2.200 0.700"/><path d="M768 635A27.6 27.6 0 0 1 759 619" stroke="#222" stroke-width="0.700"/><circle cx="768" cy="635" r="2" fill="#111"/><path d="M785.5 613.5L790.5 618.5M790.5 613.5L785.5 618.5" stroke="#e81030" stroke-width="0.800"/>
<path d="M652 663L674.5 654" stroke="#111" stroke-width="1.6" stroke-dasharray="2.200 0.700"/><path d="M674.5 654A24.2 24.2 0 0 1 678 662" stroke="#222" stroke-width="0.700"/><circle cx="674.5" cy="654" r="2" fill="#111"/><path d="M649.5 660.5L654.5 665.5M654.5 660.5L649.5 665.5" stroke="#e81030" stroke-width="0.800"/>
<path d="M686 783L697.5 761" stroke="#111" stroke-width="1.6" stroke-dasharray="2.200 0.700"/><path d="M697.5 761A24.8 24.8 0 0 0 688.5 756" stroke="#222" stroke-width="0.700"/><circle cx="697.5" cy="761" r="2" fill="#111"/><path d="M683.5 780.5L688.5 785.5M688.5 780.5L683.5 785.5" stroke="#e81030" stroke-width="0.800"/>
<path d="M684 612L662 604" stroke="#111" stroke-width="1.6" stroke-dasharray="2.200 0.700"/><path d="M662 604A23.4 23.4 0 0 0 657 612" stroke="#222" stroke-width="0.700"/><circle cx="662" cy="604" r="2" fill="#111"/><path d="M681.5 609.5L686.5 614.5M686.5 609.5L681.5 614.5" stroke="#e81030" stroke-width="0.800"/>
<path d="M688.500 395.500L694 401M694 395.500L688.500 401M688.500 490L694.500 496.500M694.500 490L688.500 496.500M688.500 613L694.500 619.500M694.500 613L688.500 619.500" stroke="#e81030" stroke-width="0.800"/>
<path d="M713.2 408V463.5" stroke="#111" stroke-width="0.800"/><text transform="translate(711.6 459.5) rotate(-90)" font-family="Liberation Sans,sans-serif" font-size="7.500" font-weight="bold" fill="#111" textLength="9" lengthAdjust="spacingAndGlyphs">Flur</text><text transform="translate(720.4000000000001 460.5) rotate(-90)" font-family="Liberation Sans,sans-serif" font-size="7" font-weight="bold" font-style="italic" fill="#111" textLength="31" lengthAdjust="spacingAndGlyphs">F = 12.0m²</text>
<path d="M809 399V454.5" stroke="#111" stroke-width="0.800"/><text transform="translate(807.4 451.5) rotate(-90)" font-family="Liberation Sans,sans-serif" font-size="7.500" font-weight="bold" fill="#111" textLength="8" lengthAdjust="spacingAndGlyphs">Bad</text><text transform="translate(816.2 452.5) rotate(-90)" font-family="Liberation Sans,sans-serif" font-size="7" font-weight="bold" font-style="italic" fill="#111" textLength="27" lengthAdjust="spacingAndGlyphs">F = 5.05m²</text>
<path d="M673.5 548V602" stroke="#111" stroke-width="0.800"/><text transform="translate(671.9 598.5) rotate(-90)" font-family="Liberation Sans,sans-serif" font-size="7.500" font-weight="bold" fill="#111" textLength="19" lengthAdjust="spacingAndGlyphs">Abstell</text><text transform="translate(680.7 599.5) rotate(-90)" font-family="Liberation Sans,sans-serif" font-size="7" font-weight="bold" font-style="italic" fill="#111" textLength="21" lengthAdjust="spacingAndGlyphs">F = 4.0m²</text>
<path d="M754.4 599V653.5" stroke="#111" stroke-width="0.800"/><text transform="translate(752.8 652) rotate(-90)" font-family="Liberation Sans,sans-serif" font-size="7.500" font-weight="bold" fill="#111" textLength="19.5" lengthAdjust="spacingAndGlyphs">Wohnen</text><text transform="translate(761.6 653) rotate(-90)" font-family="Liberation Sans,sans-serif" font-size="7" font-weight="bold" font-style="italic" fill="#111" textLength="28" lengthAdjust="spacingAndGlyphs">F = 35.4m²</text>
<path d="M839 799.500H848.500" stroke="#e81030" stroke-width="0.900"/>
</svg>
<!-- ===== 3D viewer window ===== -->
<div class="a" style="left:1002px;top:100px;width:872px;height:928px;background:#3a3a3a;border-radius:8px 8px 8px 8px;overflow:hidden;box-shadow:0 0 0 0.500px #555">
<div class="a" style="left:1px;top:31px;width:870px;height:896px;background:#d1e6ea;border-radius:0 0 7px 7px;overflow:hidden">
<svg style="left:-1003px;top:-131px" width="1920" height="1032" viewBox="0 0 1920 1032">
<defs>
<filter id="gn" x="0" y="0" width="100%" height="100%" filterUnits="objectBoundingBox" color-interpolation-filters="sRGB"><feTurbulence type="fractalNoise" baseFrequency="0.06 0.2" numOctaves="2" seed="4"/><feColorMatrix type="matrix" values="0 0 0 0 0.470  0 0 0 0 0.565  0 0 0 0 0.190  1.800 1.800 0 0 -1.450"/></filter>
<filter id="gr" x="0" y="0" width="100%" height="100%" filterUnits="objectBoundingBox" color-interpolation-filters="sRGB"><feTurbulence type="fractalNoise" baseFrequency="0.06 0.25" numOctaves="2" seed="7"/><feColorMatrix type="matrix" values="0 0 0 0 0.230  0 0 0 0 0.230  0 0 0 0 0.210  1.500 1.500 0 0 -1.150"/></filter>
<linearGradient id="lf" x1="0" y1="0" x2="1" y2="0"><stop offset="0" stop-color="#6a6a6a"/><stop offset="1" stop-color="#676767"/></linearGradient>
<linearGradient id="rf" x1="0" y1="0" x2="1" y2="0"><stop offset="0" stop-color="#727272"/><stop offset="1" stop-color="#7b7b7b"/></linearGradient>
<linearGradient id="gf" x1="0" y1="1" x2="0.900" y2="0"><stop offset="0" stop-color="#959595"/><stop offset="0.450" stop-color="#838383"/><stop offset="1" stop-color="#6b6b6b"/></linearGradient>
<linearGradient id="gs" gradientUnits="userSpaceOnUse" x1="1400" y1="794.300" x2="1397.100" y2="805.500"><stop offset="0" stop-color="#5a7118"/><stop offset="0.500" stop-color="#45580f"/><stop offset="1" stop-color="#33430b"/></linearGradient>
</defs>
<clipPath id="gcl"><polygon points="1003.0,601.0 1114.0,563.5 1300.0,500.0 1500.8,493.4 1570.0,500.3 1790.0,522.0 1874.0,530.0 1874.0,594.0 1810.0,901.5 1003.0,690.5" fill="#000"/></clipPath>
<polygon points="1003.0,601.0 1114.0,563.5 1300.0,500.0 1500.8,493.4 1570.0,500.3 1790.0,522.0 1874.0,530.0 1874.0,594.0 1810.0,901.5 1003.0,690.5" fill="#5e791b"/>
<g clip-path="url(#gcl)"><g transform="rotate(-33 1440 700)"><rect x="880" y="250" width="1150" height="950" fill="#5e791b" filter="url(#gn)"/></g></g>
<path d="M1501 494L1570 501M1790 522.500L1874 530.500" stroke="#84ad2a" stroke-width="1.200" fill="none"/>
<polygon points="1003.0,690.5 1810.0,901.5 1810.0,913.5 1003.0,703.0" fill="url(#gs)"/>
<path d="M1003 690.500L1810 901.500" stroke="#5d7a18" stroke-width="1" fill="none"/>
<clipPath id="rcl"><polygon points="1096.5,603.3 1116.3,597.0 1500.8,499.2 1569.4,505.3 1790.0,615.0 1793.0,627.0 1554.2,610.8 1564.8,567.8 1437.4,564.9 1302.5,642.5" fill="#000"/></clipPath>
<polygon points="1096.5,603.3 1116.3,597.0 1500.8,499.2 1569.4,505.3 1790.0,615.0 1793.0,627.0 1554.2,610.8 1564.8,567.8 1437.4,564.9 1302.5,642.5" fill="#4b4b48"/>
<g clip-path="url(#rcl)"><g transform="rotate(-20 1440 570)"><rect x="1050" y="380" width="800" height="420" fill="#4b4b48" filter="url(#gr)"/></g></g>
<polygon points="1161.6,632.3 1219.8,644.0 1239.5,633.0 1239.5,635.2 1219.8,646.2 1161.6,634.5" fill="#7a7a7a"/>
<polygon points="1161.6,632.3 1183.7,622.3 1239.5,633.0 1219.8,644.0" fill="#a3a3a3"/>
<polygon points="1132.1,645.6 1191.9,657.9 1212.8,646.3 1212.8,648.5 1191.9,660.1 1132.1,647.8" fill="#7a7a7a"/>
<polygon points="1132.1,645.6 1154.7,634.7 1212.8,646.3 1191.9,657.9" fill="#a3a3a3"/>
<polygon points="1100.5,659.5 1161.6,673.5 1184.9,660.9 1184.9,663.1 1161.6,675.7 1100.5,661.7" fill="#7a7a7a"/>
<polygon points="1100.5,659.5 1125.6,647.9 1184.9,660.9 1161.6,673.5" fill="#a3a3a3"/>
<polygon points="1065.8,674.9 1127.9,690.5 1153.5,677.2 1153.5,679.4 1127.9,692.7 1065.8,677.1" fill="#7a7a7a"/>
<polygon points="1065.8,674.9 1093.0,663.0 1153.5,677.2 1127.9,690.5" fill="#a3a3a3"/>
<polygon points="1028.4,692.1 1093.0,709.1 1119.8,694.4 1119.8,696.6 1093.0,711.3 1028.4,694.3" fill="#7a7a7a"/>
<polygon points="1028.4,692.1 1057.7,678.4 1119.8,694.4 1093.0,709.1" fill="#a3a3a3"/>
<polygon points="1090.1,333.1 1349.0,318.1 1503.3,320.9 1287.8,339.6" fill="#737373"/>
<polygon points="1094.0,334.2 1349.0,319.6 1355.0,319.6 1355.0,333.0 1288.0,336.5" fill="#6c6c6c"/>
<polygon points="1355.0,319.6 1500.0,321.6 1355.0,333.0" fill="#7c7c7c"/>
<path d="M1090.1 333.6L1349.0 318.6L1503.3 321.4" stroke="#565656" stroke-width="1.200" fill="none"/>
<polygon points="1091.9,338.0 1287.8,344.2 1298.5,636.0 1116.3,597.4" fill="url(#lf)"/>
<polygon points="1287.3,344.2 1503.3,324.0 1500.5,523.6 1298.0,636.0" fill="url(#rf)"/>
<polygon points="1090.1,333.1 1287.8,339.6 1287.8,344.2 1091.9,338.0" fill="#545454"/>
<polygon points="1287.8,339.6 1503.3,320.9 1503.3,324.1 1287.8,344.2" fill="#5a5a5a"/>
<path d="M1093 356L1288.500 364.500L1502.500 337.200" stroke="#9c9c9c" stroke-width="0.600" stroke-dasharray="4 2.500" fill="none"/>
<polygon points="1196.0,393.8 1228.3,395.4 1232.1,459.6 1200.7,457.0" fill="#444"/>
<polygon points="1201.0,396.0 1226.5,397.3 1227.5,411.0 1202.0,410.0" fill="#5c5c5c"/>
<path d="M1202 399H1226.500M1202 402H1226.800M1202 405H1227M1202 408H1227.200" stroke="#777" stroke-width="0.600" fill="none"/>
<polygon points="1208.0,411.0 1228.5,411.5 1230.5,453.5 1210.5,452.0" fill="#456f10"/>
<polygon points="1210.5,412.0 1228.8,412.3 1230.3,451.0 1212.5,450.0" fill="#654840"/>
<polygon points="1187.7,505.1 1197.0,502.0 1240.0,506.0 1240.0,515.3 1226.7,520.0 1187.7,514.9" fill="#4a4a4a"/>
<polygon points="1187.7,505.1 1197.0,502.0 1240.0,506.0 1226.7,509.5" fill="#585858"/>
<polygon points="1202.8,517.2 1224.4,520.0 1229.1,606.7 1210.5,611.4" fill="#848484"/>
<polygon points="1224.4,520.0 1240.7,523.0 1246.0,606.7 1229.1,603.3" fill="#3d3d3d"/>
<path d="M1243 539.5H1239V545.5H1244" stroke="#0b7418" stroke-width="1.600" fill="none"/>
<path d="M1243 551.0H1239V557.0H1244" stroke="#0b7418" stroke-width="1.600" fill="none"/>
<path d="M1243 562.5H1239V568.5H1244" stroke="#0b7418" stroke-width="1.600" fill="none"/>
<path d="M1243 574.0H1239V580.0H1244" stroke="#0b7418" stroke-width="1.600" fill="none"/>
<path d="M1243 585.5H1239V591.5H1244" stroke="#0b7418" stroke-width="1.600" fill="none"/>
<polygon points="1188.4,616.0 1245.3,627.0 1245.3,631.6 1188.4,620.7" fill="#868686"/>
<polygon points="1245.3,627.0 1255.8,620.7 1255.8,625.0 1245.3,631.6" fill="#7a7a7a"/>
<polygon points="1188.4,616.0 1229.0,604.0 1246.0,606.7 1246.5,619.0 1255.8,620.7 1245.3,627.0" fill="#9c9c9c"/>
<polygon points="1346.3,388.8 1367.2,385.6 1368.8,440.7 1348.6,446.0" fill="#3c3c3c"/><polygon points="1349.3,391.8 1364.7,388.1 1364.7,398.6 1349.3,402.3" fill="#474747"/><path d="M1349.3 394.8L1364.7 391.1M1349.3 397.8L1364.7 394.1M1349.3 400.8L1364.7 397.1" stroke="#6a6a6a" stroke-width="0.600" fill="none"/><polygon points="1350.1,403.8 1356.5,403.1 1357.1,438.0 1352.4,439.5" fill="#7a5e57"/><path d="M1356.8 403.1L1357.4 438.7L1352.6 440.2" stroke="#55801a" stroke-width="1.100" fill="none"/>
<polygon points="1372.3,384.4 1391.4,381.4 1392.6,434.4 1373.7,439.1" fill="#3c3c3c"/><polygon points="1375.3,387.4 1388.9,383.9 1388.9,394.4 1375.3,397.9" fill="#474747"/><path d="M1375.3 390.4L1388.9 386.9M1375.3 393.4L1388.9 389.9M1375.3 396.4L1388.9 392.9" stroke="#6a6a6a" stroke-width="0.600" fill="none"/><polygon points="1376.1,399.4 1381.9,398.7 1382.5,431.1 1377.5,432.6" fill="#7a5e57"/><path d="M1382.2 398.7L1382.8 431.8L1377.7 433.3" stroke="#55801a" stroke-width="1.100" fill="none"/>
<polygon points="1396.0,380.2 1413.7,377.4 1414.2,428.4 1397.0,432.6" fill="#3c3c3c"/><polygon points="1399.0,383.2 1411.2,379.9 1411.2,390.4 1399.0,393.7" fill="#474747"/><path d="M1399.0 386.2L1411.2 382.9M1399.0 389.2L1411.2 385.9M1399.0 392.2L1411.2 388.9" stroke="#6a6a6a" stroke-width="0.600" fill="none"/><polygon points="1399.8,395.2 1405.2,394.5 1405.8,424.6 1400.8,426.1" fill="#7a5e57"/><path d="M1405.5 394.5L1406.1 425.3L1401.0 426.8" stroke="#55801a" stroke-width="1.100" fill="none"/>
<polygon points="1414.5,489.0 1429.9,485.5 1430.7,531.6 1415.8,538.0" fill="#3e3e3e"/>
<polygon points="1418.0,493.0 1427.5,491.0 1428.0,528.0 1419.0,532.0" fill="#4c4c4c"/>
<path d="M1420 497V530" stroke="#4f7a12" stroke-width="1.200" fill="none"/><path d="M1424.500 493L1426.500 499L1424 505L1426.500 511L1424 517L1426 523" stroke="#cfcfcf" stroke-width="1" fill="none"/>
<polygon points="1437.1,479.1 1452.0,476.2 1452.0,546.5 1438.0,553.8" fill="#3e3e3e"/>
<polygon points="1441.0,483.0 1448.5,481.5 1449.0,545.0 1441.8,548.5" fill="#484848"/>
<path d="M1442.300 484V547" stroke="#4f7a12" stroke-width="1.300" fill="none"/>
<polygon points="1588.4,439.6 1754.7,444.4 1793.3,497.4 1570.1,489.3" fill="#bdbdbd"/>
<polygon points="1590.6,441.4 1750.4,445.7 1750.4,461.0 1590.1,456.0" fill="#7e7e7e"/>
<polygon points="1590.1,456.0 1750.4,461.0 1770.6,495.9 1577.1,487.6" fill="#a9a9a9"/>
<polygon points="1750.4,445.7 1750.4,461.0 1770.6,495.9 1787.0,496.8" fill="#b2b2b2"/>
<polygon points="1590.6,441.4 1590.1,456.0 1577.1,487.6 1573.0,488.5" fill="#9d9d9d"/>
<polygon points="1570.1,489.3 1793.3,497.4 1779.8,621.7 1565.7,609.7" fill="url(#gf)"/>
<path d="M1570.1 489.6L1793.3 497.7" stroke="#a4a4a4" stroke-width="1.600" fill="none"/>
<polygon points="1649.0,529.0 1765.0,533.8 1756.9,616.2 1644.6,610.1" fill="#5e5e5e"/>
<pattern id="sp" width="23" height="17" patternUnits="userSpaceOnUse" patternTransform="rotate(3)"><path d="M2 3h.7v.7h-.7zM9 1h.7v.7h-.7zM15 6h.7v.7h-.7zM20 2h.7v.7h-.7zM5 10h.7v.7h-.7zM12 13h.7v.7h-.7zM18 11h.7v.7h-.7zM21 15h.7v.7h-.7zM7 15h.7v.7h-.7zM11 7h.7v.7h-.7z" fill="#ddd"/></pattern>
<polygon points="1652.0,531.0 1763.0,535.5 1755.5,614.5 1647.0,608.5" fill="url(#sp)" opacity="0.650"/>
<polygon points="1600.0,843.0 1812.0,894.7 1811.5,900.0 1600.0,848.0" fill="#5b5b5b"/>
<polygon points="1615.2,610.1 1768.9,618.8 1833.7,785.4 1812.0,894.7 1600.0,843.0" fill="#929292"/>
</svg>
<div class="a" style="left:625px;top:0;width:245px;height:21px;background:#000;color:#fff;text-align:center;font-weight:bold;font-size:11px;line-height:19px;letter-spacing:-0.400px">Optionen öffnen</div>
<svg style="left:-1003px;top:-131px" width="1920" height="1032" viewBox="0 0 1920 1032"><g fill="#fff" stroke="#fff" stroke-width="1.600" stroke-linejoin="round"><path d="M1035 140L1058 152.300L1035 164.600L1012.300 152.300Z"/><path d="M1012.300 162.900L1017 160.200L1035 169.500L1053.200 160.200L1058 162.900L1035 175.300Z"/><path d="M1012.300 173.600L1017 170.900L1035 180.200L1053.200 170.900L1058 173.600L1035 186Z"/></g></svg>
<div class="a" style="left:10px;top:849px;width:37px;height:37px;border:1px solid #222;background:#e9f1f3"></div>
<svg style="left:10px;top:849px" width="38" height="38" viewBox="0 0 38 38" fill="none"><path d="M19.500 5V19" stroke="#1060e0" stroke-width="1.300"/><path d="M19.500 19L33 20.500" stroke="#40d020" stroke-width="1.300"/><path d="M19.500 19L10.500 24" stroke="#f06020" stroke-width="1.300"/></svg>
<div class="a" style="left:793px;top:819px;width:61px;height:61px;border-radius:50%;background:#db4437;box-shadow:0 2px 4px rgba(0,0,0,0.400),0 0 2px rgba(0,0,0,0.250)"></div>
<svg style="left:793px;top:819px" width="61" height="61" viewBox="-30.500 -30.500 61 61" fill="none"><path d="M-11.800 -2.500A12 12 0 0 1 9.500 -7.500" stroke="#fff" stroke-width="4.600"/><path d="M14.500 -14.100V-2.900H3.800Z" fill="#fff"/><path d="M11.800 3.500A12 12 0 0 1 -9.500 8.500" stroke="#fff" stroke-width="4.600"/><path d="M-14.700 14.300V3.400H-4.500Z" fill="#fff"/></svg>
</div>
<svg style="left:10px;top:6px" width="14" height="18" viewBox="0 0 14 18"><path d="M3.500 1H11V10H12.300V14.600L8 17V2.500Z" fill="#2a1d12"/><path d="M1 1.200L8.200 2.600V17L1 14.200Z" fill="#f78a0c"/><path d="M2.500 4.200L6 5.200L5 8.500M3 6.600L5.800 7.300" stroke="#2a1d12" stroke-width="1.100" fill="none"/></svg>
<div class="t" style="left:31px;top:9px;color:#fff;letter-spacing:-0.19px;--w:71.2">ST 3D-Viewer</div>
<svg style="left:750px;top:8px" width="110" height="16" viewBox="0 0 110 16" fill="none"><path d="M2 7.500H12" stroke="#fff" stroke-width="1"/><rect x="47.500" y="2.500" width="9" height="9" rx="1" stroke="#fff" stroke-width="1"/><path d="M93 2.500L103 12.500M103 2.500L93 12.500" stroke="#fff" stroke-width="1"/></svg>
</div>
</body></html>
